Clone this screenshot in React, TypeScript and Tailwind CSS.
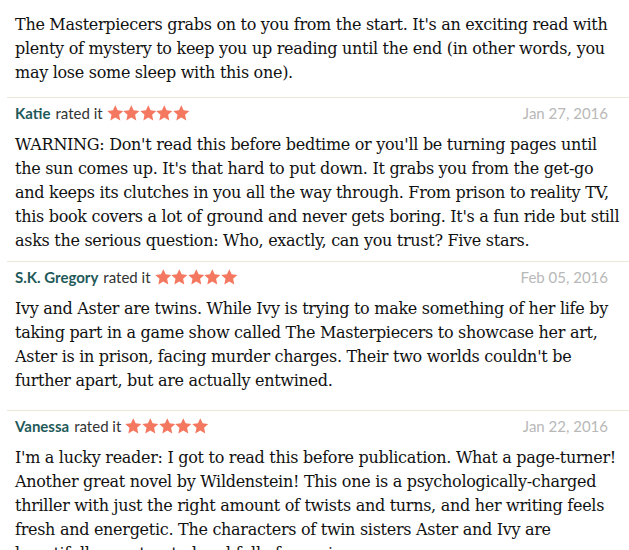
const intro = [
  "The Masterpiecers grabs on to you from the start. It's an exciting read with",
  'plenty of mystery to keep you up reading until the end (in other words, you',
  'may lose some sleep with this one).',
];

const reviews = [
  {
    name: 'Katie',
    date: 'Jan 27, 2016',
    pb: 'pb-[8px]',
    lines: [
      "WARNING: Don't read this before bedtime or you'll be turning pages until",
      "the sun comes up. It's that hard to put down. It grabs you from the get-go",
      'and keeps its clutches in you all the way through. From prison to reality TV,',
      "this book covers a lot of ground and never gets boring. It's a fun ride but still",
      'asks the serious question: Who, exactly, can you trust? Five stars.',
    ],
  },
  {
    name: 'S.K. Gregory',
    date: 'Feb 05, 2016',
    pb: 'pb-[17px]',
    lines: [
      'Ivy and Aster are twins. While Ivy is trying to make something of her life by',
      'taking part in a game show called The Masterpiecers to showcase her art,',
      "Aster is in prison, facing murder charges. Their two worlds couldn't be",
      'further apart, but are actually entwined.',
    ],
  },
  {
    name: 'Vanessa',
    date: 'Jan 22, 2016',
    pb: 'pb-[10px]',
    lines: [
      "I'm a lucky reader: I got to read this before publication. What a page-turner!",
      'Another great novel by Wildenstein! This one is a psychologically-charged',
      'thriller with just the right amount of twists and turns, and her writing feels',
      'fresh and energetic. The characters of twin sisters Aster and Ivy are',
      'beautifully constructed and full of surprises.',
    ],
  },
];

function Stars() {
  return (
    <span className="ml-[4px] inline-flex items-center">
      {[0, 1, 2, 3, 4].map((i) => (
        <svg key={i} width="16.6" height="16" viewBox="0 0 24 23" className="block">
          <path
            d="M12 0.3l3.4 7.3 8.2.9-6.1 5.6 1.7 8.1L12 18.1l-7.2 4.1 1.7-8.1L.4 8.5l8.2-.9z"
            fill="#f47860"
          />
        </svg>
      ))}
    </span>
  );
}

function Body({ lines }: { lines: string[] }) {
  return (
    <p className="text-[16px] leading-6 tracking-[-0.29px] text-[#111] [font-family:'DejaVu_Serif',serif]">
      {lines.map((line) => (
        <span key={line} className="block whitespace-nowrap">
          {line}
        </span>
      ))}
    </p>
  );
}

export default function App() {
  return (
    <div className="h-[550px] w-[629px] overflow-hidden bg-white">
      <div className="pl-[15px] pt-[13px] pb-[12px]">
        <Body lines={intro} />
      </div>
      {reviews.map((r) => (
        <div key={r.name} className={`ml-[7px] border-t border-[#ebe7d6] pt-[5px] ${r.pb}`}>
          <div className="flex items-center justify-between pl-2 pr-[21px] text-[15px] leading-5 [font-family:Lato,sans-serif]">
            <div className="flex items-center text-[#333]">
              <span className="font-bold text-[#1f5a5a]">{r.name}</span>
              <span className="ml-[5px]">rated it</span>
              <Stars />
            </div>
            <span className="text-[#b8b8b8]">{r.date}</span>
          </div>
          <div className="mt-[10px] pl-2">
            <Body lines={r.lines} />
          </div>
        </div>
      ))}
    </div>
  );
}
